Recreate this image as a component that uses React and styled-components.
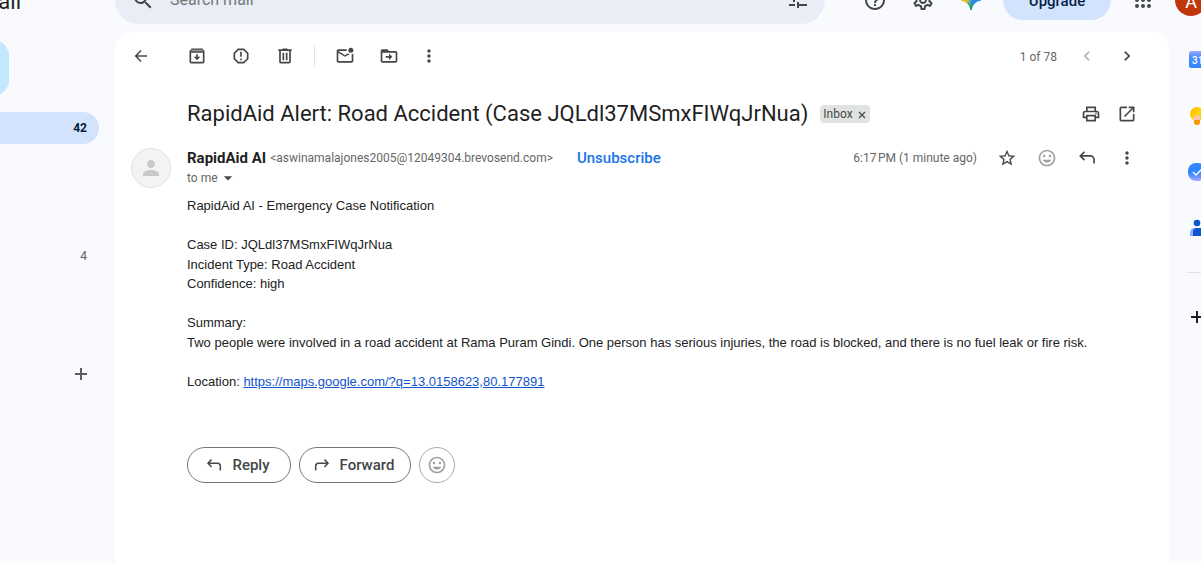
import React from "react";
import styled, { createGlobalStyle } from "styled-components";
import {
  MdArrowDropDown,
  MdChevronLeft,
  MdChevronRight,
  MdHelpOutline,
  MdMoreVert,
  MdOutlineInsertEmoticon,
  MdOutlinePrint,
  MdOutlineSettings,
  MdPerson,
  MdReportGmailerrorred,
  MdSearch,
  MdStarBorder,
} from "react-icons/md";

const uiFont = `Roboto, "Liberation Sans", sans-serif`;

const GlobalStyle = createGlobalStyle`
  * { box-sizing: border-box; }
  body {
    margin: 0;
    background: #f8fafd;
    color: #1f1f1f;
    font-family: ${uiFont};
    overflow: hidden;
  }
  button { font: inherit; color: inherit; cursor: pointer; }
  svg { display: block; flex: none; }
`;

const Shell = styled.div`
  display: flex;
  flex-direction: column;
  min-height: 100vh;
  overflow: hidden;
`;

const Header = styled.header`
  display: flex;
  align-items: center;
  height: 48px;
  margin: -24px -6px 8px 0;
`;

const Brand = styled.a`
  display: flex;
  justify-content: flex-end;
  flex: none;
  width: 115px;
  padding: 4px 94px 0 0;
  overflow: hidden;
  color: #1f1f1f;
  font-size: 22px;
  line-height: 28px;
  text-decoration: none;
`;

const SearchBar = styled.form`
  display: flex;
  align-items: center;
  flex: 0 1 710px;
  height: 48px;
  padding: 0 8px;
  border-radius: 24px;
  background: #e9eef6;
  color: #444746;
`;

const SearchInput = styled.input`
  flex: 1;
  min-width: 0;
  padding: 0 0 0 7px;
  border: 0;
  outline: 0;
  background: transparent;
  font: 16px/24px ${uiFont};
  &::placeholder { color: #747775; opacity: 1; }
`;

const IconButton = styled.button`
  display: inline-flex;
  align-items: center;
  justify-content: center;
  flex: none;
  width: ${(p) => p.$w || 40}px;
  height: ${(p) => p.$h || 40}px;
  padding: 0;
  border: 0;
  background: transparent;
  color: ${(p) => p.$color || "#444746"};
`;

const HeaderActions = styled.div`
  display: flex;
  align-items: center;
  margin-left: auto;
`;

const Upgrade = styled.button`
  width: 108px;
  height: 40px;
  margin: 0 8px;
  padding: 2px 0 0;
  border: 0;
  border-radius: 20px;
  background: #d3e3fd;
  color: #041e49;
  font-size: 15px;
  font-weight: 500;
`;

const Account = styled.button`
  width: 32px;
  height: 32px;
  margin-left: 8px;
  padding: 2px 0 0;
  border: 0;
  border-radius: 50%;
  background: #bf360c;
  color: #fff;
  font-size: 18px;
`;

const Columns = styled.div`
  display: flex;
  flex: 1;
`;

const Sidebar = styled.nav`
  display: flex;
  flex-direction: column;
  align-items: stretch;
  flex: none;
  width: 115px;
  padding: 8px 16px 0 0;
`;

const Compose = styled.button`
  width: 41px;
  height: 56px;
  margin: 0 0 16px -32px;
  padding: 0;
  border: 0;
  border-radius: 16px;
  background: #c2e7ff;
`;

const FolderLink = styled.a`
  display: flex;
  align-items: center;
  justify-content: flex-end;
  height: 32px;
  padding-right: 12px;
  border-radius: 0 16px 16px 0;
  background: ${(p) => (p.$active ? "#d3e3fd" : "transparent")};
  color: ${(p) => (p.$active ? "#001d35" : "#5e5e5e")};
  font-size: 12px;
  font-weight: ${(p) => (p.$active ? 700 : 400)};
  text-decoration: none;
`;

const LabelsRow = styled.div`
  display: flex;
  justify-content: flex-end;
  margin-top: 82px;
  padding-right: 8px;
`;

const FolderGap = styled.div`
  height: 96px;
`;

const Mail = styled.main`
  flex: 1;
  min-width: 0;
  border-radius: 16px 16px 0 0;
  background: #fff;
`;

const Toolbar = styled.div`
  display: flex;
  align-items: center;
  height: 48px;
  padding: 0 22px 0 6px;
`;

const ToolGroup = styled.div`
  display: flex;
  gap: 4px;
  padding-left: ${(p) => p.$indent}px;
`;

const Divider = styled.div`
  width: 1px;
  height: 20px;
  margin-left: 9px;
  background: #e3e3e3;
`;

const Count = styled.span`
  margin: 0 10px 0 auto;
  padding-top: 2px;
  color: #666;
  font-size: 12px;
`;

const SubjectRow = styled.div`
  display: flex;
  align-items: center;
  min-height: 68px;
  padding: 0 24px 0 72px;
`;

const Subject = styled.h1`
  margin: 0;
  font-size: 22px;
  font-weight: 400;
  line-height: 28px;
`;

const Chip = styled.div`
  display: flex;
  align-items: center;
  height: 18px;
  margin: 0 auto 0 12px;
  padding: 0 3px;
  border-radius: 4px;
  background: #e1e3e1;
  color: #444746;
  font-size: 12px;
`;

const ChipClose = styled.button`
  display: flex;
  margin-left: 4px;
  padding: 0;
  border: 0;
  background: transparent;
`;

const Message = styled.article`
  display: grid;
  grid-template-columns: 56px 1fr;
  padding: 0 22px 0 16px;
`;

const Avatar = styled.div`
  display: flex;
  align-items: center;
  justify-content: center;
  width: 40px;
  height: 40px;
  border: 1px solid #e3e3e3;
  border-radius: 50%;
  background: #f3f3f3;
  color: #c9c9c9;
`;

const SenderLine = styled.div`
  display: flex;
  align-items: center;
  height: 20px;
  color: #666;
  font-size: 12px;
  white-space: nowrap;
`;

const SenderName = styled.h2`
  margin: 0 4px 0 0;
  color: #1f1f1f;
  font-size: 15px;
  font-weight: 700;
`;

const Unsubscribe = styled.a`
  margin-left: 24px;
  color: #1a73e8;
  font-size: 15px;
  font-weight: 500;
  text-decoration: none;
`;

const Time = styled.time`
  margin: 0 10px 0 auto;
`;

const Recipient = styled.button`
  display: flex;
  align-items: center;
  height: 20px;
  padding: 0;
  border: 0;
  background: transparent;
  color: #666;
  font-size: 12px;

  svg { color: #444746; }
`;

const Body = styled.div`
  grid-column: 2;
  padding-top: 8px;
  color: #222;
  font: 13px/1.5 "Liberation Sans", Arial, sans-serif;
  p { margin: 0 0 1.5em; }
  a { color: #1155cc; }
`;

const Replies = styled.div`
  display: flex;
  grid-column: 2;
  gap: 8px;
  padding-top: 36px;
`;

const PillButton = styled.button`
  display: flex;
  align-items: center;
  justify-content: center;
  gap: 8px;
  width: ${(p) => p.$w}px;
  height: 36px;
  padding: 0 ${(p) => (p.$round ? 0 : 4)}px 0 0;
  border: 1px solid ${(p) => (p.$round ? "#a9aaa9" : "#747775")};
  border-radius: 18px;
  background: #fff;
  color: ${(p) => (p.$round ? "#a0a1a0" : "#444746")};
  font-size: 15px;
  font-weight: 500;
`;

const Rail = styled.aside`
  display: flex;
  flex-direction: column;
  align-items: center;
  flex: none;
  width: 56px;
  margin-right: -24px;
`;

const RailRule = styled.div`
  width: 20px;
  height: 1px;
  margin: 16px 0;
  background: #dfe1e5;
`;

const Glyph = ({ size = 20, box = 24, children }) => (
  <svg width={size} height={size} viewBox={`0 0 ${box} ${box}`} fill="currentColor" aria-hidden="true">
    {children}
  </svg>
);

const BackIcon = () => (
  <Glyph size={20} box={20}>
    <path d="M10 4.500 4.700 10l5.300 5.500M4.700 10H16" fill="none" stroke="currentColor" strokeWidth="1.500" />
  </Glyph>
);
const TuneIcon = () => (
  <Glyph size={24}>
    <path d="M4 16h6v2H4zM12 14h2v2h8v2h-8v2h-2zM4 7h10v2H4zM16 7h6v2h-6zM8 5h2v9H8z" />
  </Glyph>
);
const ArchiveIcon = () => (
  <Glyph>
    <path fillRule="evenodd" d="M5.500 3h13L21 6v13a2 2 0 0 1-2 2H5a2 2 0 0 1-2-2V6zM5 8v11h14V8z" />
    <path d="M5.500 4.600h13l1 1.800h-15z" fill="#a0a1a0" />
    <path d="M11 10h2v3h3l-4 4-4-4h3z" />
  </Glyph>
);
const TrashIcon = () => (
  <Glyph>
    <path fillRule="evenodd" d="M9 3h6v1h5v2h-1v13a2 2 0 0 1-2 2H7a2 2 0 0 1-2-2V6H4V4h5zM7 6v13h10V6zM9 8h2v9H9zM13 8h2v9h-2z" />
  </Glyph>
);
const UnreadIcon = () => (
  <Glyph>
    <path d="M22 9v9a2 2 0 0 1-2 2H4a2 2 0 0 1-2-2V6c0-1.100.9-2 2-2h10.100a5 5 0 0 0 0 2H4l8 5 3.700-2.300a5 5 0 0 0 1.700 1.300L12 13 4 8v10h16V9.900A5 5 0 0 0 22 9z" />
    <circle cx="19" cy="5" r="3" />
  </Glyph>
);
const MoveIcon = () => (
  <Glyph>
    <path fillRule="evenodd" d="M4 4h6l2 2h8a2 2 0 0 1 2 2v10a2 2 0 0 1-2 2H4a2 2 0 0 1-2-2V6a2 2 0 0 1 2-2zM4 8v10h16V8z" />
    <path d="M12 9l4 4-4 4v-3H8v-2h4z" />
  </Glyph>
);
const OpenIcon = () => (
  <Glyph>
    <path d="M12 3v2H5v14h14v-7h2v7a2 2 0 0 1-2 2H5a2 2 0 0 1-2-2V5a2 2 0 0 1 2-2zM14 3h7v7h-2V6.400l-9.300 9.300-1.400-1.400L17.600 5H14z" />
  </Glyph>
);
const ReplyIcon = () => (
  <Glyph>
    <path d="M9 4.500 4 9.500l5 5M4 9.500h12a4.500 4.500 0 0 1 4.500 4.500v4.500" fill="none" stroke="currentColor" strokeWidth="2" />
  </Glyph>
);
const PillArrow = ({ flip }) => (
  <Glyph size={20} box={20}>
    <g transform={flip ? "translate(20 0) scale(-1 1)" : undefined} fill="none" stroke="currentColor" strokeWidth="1.500">
      <path d="M7.500 4.500 4 8.200l3.500 3.700M4 8.200h9.500a2.800 2.800 0 0 1 2.800 2.800v4.500" />
    </g>
  </Glyph>
);
const PlusIcon = () => (
  <Glyph size={20} box={20}>
    <path d="M9 4h2v5h5v2h-5v5H9v-5H4V9h5z" />
  </Glyph>
);
const AppsIcon = () => (
  <Glyph size={24}>
    {[6, 12, 18].map((y) => [6, 12, 18].map((x) => <circle key={`${x}-${y}`} cx={x} cy={y} r="2" />))}
  </Glyph>
);
const sparkPath = "M12 2q1.500 8.500 10 10-8.500 1.500-10 10Q10.500 13.500 2 12 10.500 10.500 12 2z";
const SparkIcon = () => (
  <Glyph size={24}>
    <defs>
      <linearGradient id="spark" x1="2" y1="12" x2="22" y2="12" gradientUnits="userSpaceOnUse">
        <stop offset="0" stopColor="#fbbc04" />
        <stop offset=".36" stopColor="#b9c33b" />
        <stop offset=".55" stopColor="#3186ff" />
        <stop offset="1" stopColor="#3186ff" />
      </linearGradient>
      <linearGradient id="sparkTip" x1="12" y1="13" x2="12" y2="20" gradientUnits="userSpaceOnUse">
        <stop offset="0" stopColor="#12a86b" stopOpacity="0" />
        <stop offset="1" stopColor="#12a86b" />
      </linearGradient>
    </defs>
    <path d={sparkPath} fill="url(#spark)" stroke="url(#spark)" />
    <path d={sparkPath} fill="url(#sparkTip)" stroke="url(#sparkTip)" />
  </Glyph>
);
const CalendarIcon = () => (
  <Glyph size={20} box={20}>
    <defs>
      <linearGradient id="cal" x1="0" y1="0" x2="0" y2="1">
        <stop offset="0" stopColor="#9aa8ff" />
        <stop offset=".35" stopColor="#4f8dfd" />
        <stop offset="1" stopColor="#3186ff" />
      </linearGradient>
    </defs>
    <rect x="2" y="1" width="17" height="17" rx="2.500" fill="url(#cal)" />
    <text x="5" y="14" fontSize="10" fontWeight="500" fill="#fff">31</text>
  </Glyph>
);
const KeepIcon = () => (
  <Glyph size={20} box={20}>
    <defs>
      <linearGradient id="bulb" x1="0" y1="0" x2="1" y2="1">
        <stop offset="0" stopColor="#ffb300" />
        <stop offset=".5" stopColor="#ffd600" />
      </linearGradient>
    </defs>
    <circle cx="10" cy="8" r="7" fill="url(#bulb)" />
    <rect x="7" y="10" width="6" height="9" rx="3" fill="#f79400" />
    <path d="M7 14v-2a3 3 0 0 1 6 0v2z" fill="#ffc2ba" />
  </Glyph>
);
const TasksIcon = () => (
  <Glyph size={20} box={20}>
    <defs>
      <linearGradient id="task" x1="0" y1="0" x2="0" y2="1">
        <stop offset=".55" stopColor="#3186ff" />
        <stop offset="1" stopColor="#a9a8ff" />
      </linearGradient>
    </defs>
    <rect x="1" y="1" width="18" height="18" rx="8" fill="url(#task)" />
    <path d="M6 10l3 3 6-6" fill="none" stroke="#fff" strokeWidth="1.500" />
  </Glyph>
);
const ContactsIcon = () => (
  <Glyph size={20} box={20}>
    <path d="M3 18v-4a5 5 0 0 1 5-4h4a5 5 0 0 1 5 4v4z" fill="#8ab0ff" />
    <path d="M6 18v-4a4 4 0 0 1 4-4h3a5 5 0 0 1 4 4v4z" fill="#0b57d0" />
    <circle cx="10" cy="5" r="3.300" fill="#0b57d0" />
  </Glyph>
);
const CloseIcon = () => (
  <Glyph size={10} box={10}>
    <path d="M2 3l6 6M8 3L2 9" stroke="currentColor" strokeWidth="1.200" />
  </Glyph>
);

export default function App() {
  return (
    <Shell>
      <GlobalStyle />
      <Header>
        <Brand href="#home">Gmail</Brand>
        <SearchBar role="search">
          <IconButton type="button" aria-label="Search"><MdSearch size={24} /></IconButton>
          <SearchInput type="text" aria-label="Search mail" placeholder="Search mail" />
          <IconButton type="button" aria-label="Search options"><TuneIcon /></IconButton>
        </SearchBar>
        <HeaderActions>
          <IconButton $w={48} aria-label="Support"><MdHelpOutline size={24} /></IconButton>
          <IconButton $w={48} aria-label="Settings"><MdOutlineSettings size={24} /></IconButton>
          <IconButton $w={48} aria-label="Gemini"><SparkIcon /></IconButton>
          <Upgrade>Upgrade</Upgrade>
          <IconButton $w={48} aria-label="Apps"><AppsIcon /></IconButton>
          <Account aria-label="Account">A</Account>
        </HeaderActions>
      </Header>
      <Columns>
        <Sidebar aria-label="Folders">
          <Compose aria-label="Compose" />
          <FolderLink href="#inbox" $active>42</FolderLink>
          <FolderGap />
          <FolderLink href="#drafts">4</FolderLink>
          <LabelsRow>
            <IconButton $w={20} $color="#5e5e5e" aria-label="Create label"><PlusIcon /></IconButton>
          </LabelsRow>
        </Sidebar>
        <Mail>
          <Toolbar>
            <IconButton aria-label="Back"><BackIcon /></IconButton>
            <ToolGroup $indent={16}>
              <IconButton aria-label="Archive"><ArchiveIcon /></IconButton>
              <IconButton aria-label="Report spam"><MdReportGmailerrorred size={20} /></IconButton>
              <IconButton aria-label="Delete"><TrashIcon /></IconButton>
            </ToolGroup>
            <Divider />
            <ToolGroup $indent={10}>
              <IconButton aria-label="Mark as unread"><UnreadIcon /></IconButton>
              <IconButton aria-label="Move to"><MoveIcon /></IconButton>
            </ToolGroup>
            <IconButton aria-label="More"><MdMoreVert size={20} /></IconButton>
            <Count>1 of 78</Count>
            <IconButton $color="#b4b5b4" aria-label="Newer"><MdChevronLeft size={20} /></IconButton>
            <IconButton aria-label="Older"><MdChevronRight size={20} /></IconButton>
          </Toolbar>
          <SubjectRow>
            <Subject>RapidAid Alert: Road Accident (Case JQLdl37MSmxFIWqJrNua)</Subject>
            <Chip>
              Inbox
              <ChipClose aria-label="Remove label"><CloseIcon /></ChipClose>
            </Chip>
            <IconButton $w={36} aria-label="Print"><MdOutlinePrint size={20} /></IconButton>
            <IconButton $w={36} aria-label="Open in new window"><OpenIcon /></IconButton>
          </SubjectRow>
          <Message>
            <Avatar><MdPerson size={24} /></Avatar>
            <div>
              <SenderLine>
                <SenderName>RapidAid AI</SenderName>
                <span>&lt;aswinamalajones2005@12049304.brevosend.com&gt;</span>
                <Unsubscribe href="#unsubscribe">Unsubscribe</Unsubscribe>
                <Time>{"6:17\u202fPM (1 minute ago)"}</Time>
                <IconButton aria-label="Star"><MdStarBorder size={20} /></IconButton>
                <IconButton $color="#a0a1a0" aria-label="Add reaction"><MdOutlineInsertEmoticon size={20} /></IconButton>
                <IconButton aria-label="Reply"><ReplyIcon /></IconButton>
                <IconButton aria-label="More options"><MdMoreVert size={20} /></IconButton>
              </SenderLine>
              <Recipient>to me <MdArrowDropDown size={20} /></Recipient>
            </div>
            <Body>
              <p>RapidAid AI - Emergency Case Notification</p>
              <p>
                Case ID: JQLdl37MSmxFIWqJrNua<br />
                Incident Type: Road Accident<br />
                Confidence: high
              </p>
              <p>
                Summary:<br />
                Two people were involved in a road accident at Rama Puram Gindi. One person has serious injuries, the road is blocked, and there is no fuel leak or fire risk.
              </p>
              <p>Location: <a href="#map">https://maps.google.com/?q=13.0158623,80.177891</a></p>
            </Body>
            <Replies>
              <PillButton $w={104}><PillArrow />Reply</PillButton>
              <PillButton $w={112}><PillArrow flip />Forward</PillButton>
              <PillButton $w={36} $round aria-label="React"><MdOutlineInsertEmoticon size={20} /></PillButton>
            </Replies>
          </Message>
        </Mail>
        <Rail>
          <IconButton $h={56} aria-label="Calendar"><CalendarIcon /></IconButton>
          <IconButton $h={56} aria-label="Keep"><KeepIcon /></IconButton>
          <IconButton $h={56} aria-label="Tasks"><TasksIcon /></IconButton>
          <IconButton $h={56} aria-label="Contacts"><ContactsIcon /></IconButton>
          <RailRule />
          <IconButton $h={56} $color="#1f1f1f" aria-label="Get add-ons"><PlusIcon /></IconButton>
        </Rail>
      </Columns>
    </Shell>
  );
}
